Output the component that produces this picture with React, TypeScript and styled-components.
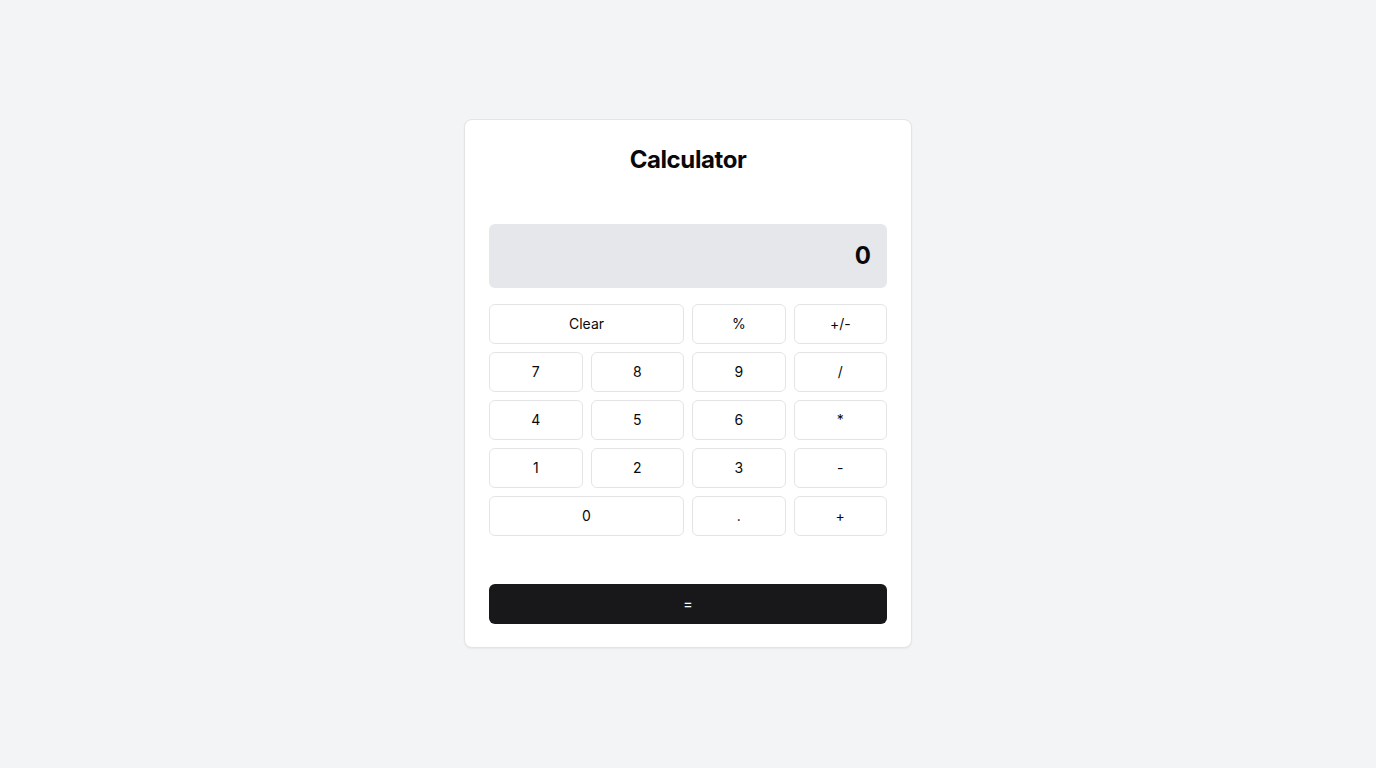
import React from "react";
import styled, { createGlobalStyle } from "styled-components";

const Global = createGlobalStyle`
  html, body { margin: 0; padding: 0; }
  body {
    background: #f3f4f6;
    font-family: Inter, "Liberation Sans", Arial, sans-serif;
    color: #09090b;
  }
  * { box-sizing: border-box; }
`;

const Page = styled.div`
  min-height: 768px;
  display: flex;
  justify-content: center;
  align-items: flex-start;
  padding-top: 119px;
`;

const Card = styled.div`
  width: 448px;
  background: #ffffff;
  border: 1px solid #e4e4e7;
  border-radius: 8px;
  box-shadow: 0 1px 2px rgba(0, 0, 0, 0.05);
  padding: 24px 24px 23px;
  display: flex;
  flex-direction: column;
`;

const Title = styled.h1`
  margin: 0;
  font-size: 24px;
  line-height: 32px;
  font-weight: 700;
  text-align: center;
  letter-spacing: -0.4px;
`;

const Display = styled.div`
  margin-top: 48px;
  height: 64px;
  background: #e5e7eb;
  border-radius: 6px;
  display: flex;
  align-items: center;
  justify-content: flex-end;
  padding: 0 16px 1px;
  font-size: 24px;
  font-weight: 700;
`;

const Grid = styled.div`
  margin-top: 16px;
  display: grid;
  grid-template-columns: repeat(4, 1fr);
  gap: 8px;
`;

const Key = styled.button<{ $span?: number }>`
  grid-column: span ${(p) => p.$span ?? 1};
  height: 40px;
  background: #ffffff;
  border: 1px solid #e4e4e7;
  border-radius: 6px;
  font-family: inherit;
  font-size: 14px;
  font-weight: 400;
  color: #09090b;
  cursor: pointer;
  padding: 0 0 2px;
`;

const Equals = styled.button`
  margin-top: 48px;
  height: 40px;
  background: #18181b;
  color: #fafafa;
  border: none;
  border-radius: 6px;
  font-family: inherit;
  font-size: 14px;
  font-weight: 500;
  cursor: pointer;
  padding: 0 0 2px;
`;

const keys: { label: string; span?: number }[] = [
  { label: "Clear", span: 2 },
  { label: "%" },
  { label: "+/-" },
  { label: "7" },
  { label: "8" },
  { label: "9" },
  { label: "/" },
  { label: "4" },
  { label: "5" },
  { label: "6" },
  { label: "*" },
  { label: "1" },
  { label: "2" },
  { label: "3" },
  { label: "-" },
  { label: "0", span: 2 },
  { label: "." },
  { label: "+" },
];

export default function App() {
  return (
    <>
      <Global />
      <Page>
        <Card>
          <Title>Calculator</Title>
          <Display>0</Display>
          <Grid>
            {keys.map((k) => (
              <Key key={k.label} $span={k.span}>
                {k.label}
              </Key>
            ))}
          </Grid>
          <Equals>=</Equals>
        </Card>
      </Page>
    </>
  );
}
